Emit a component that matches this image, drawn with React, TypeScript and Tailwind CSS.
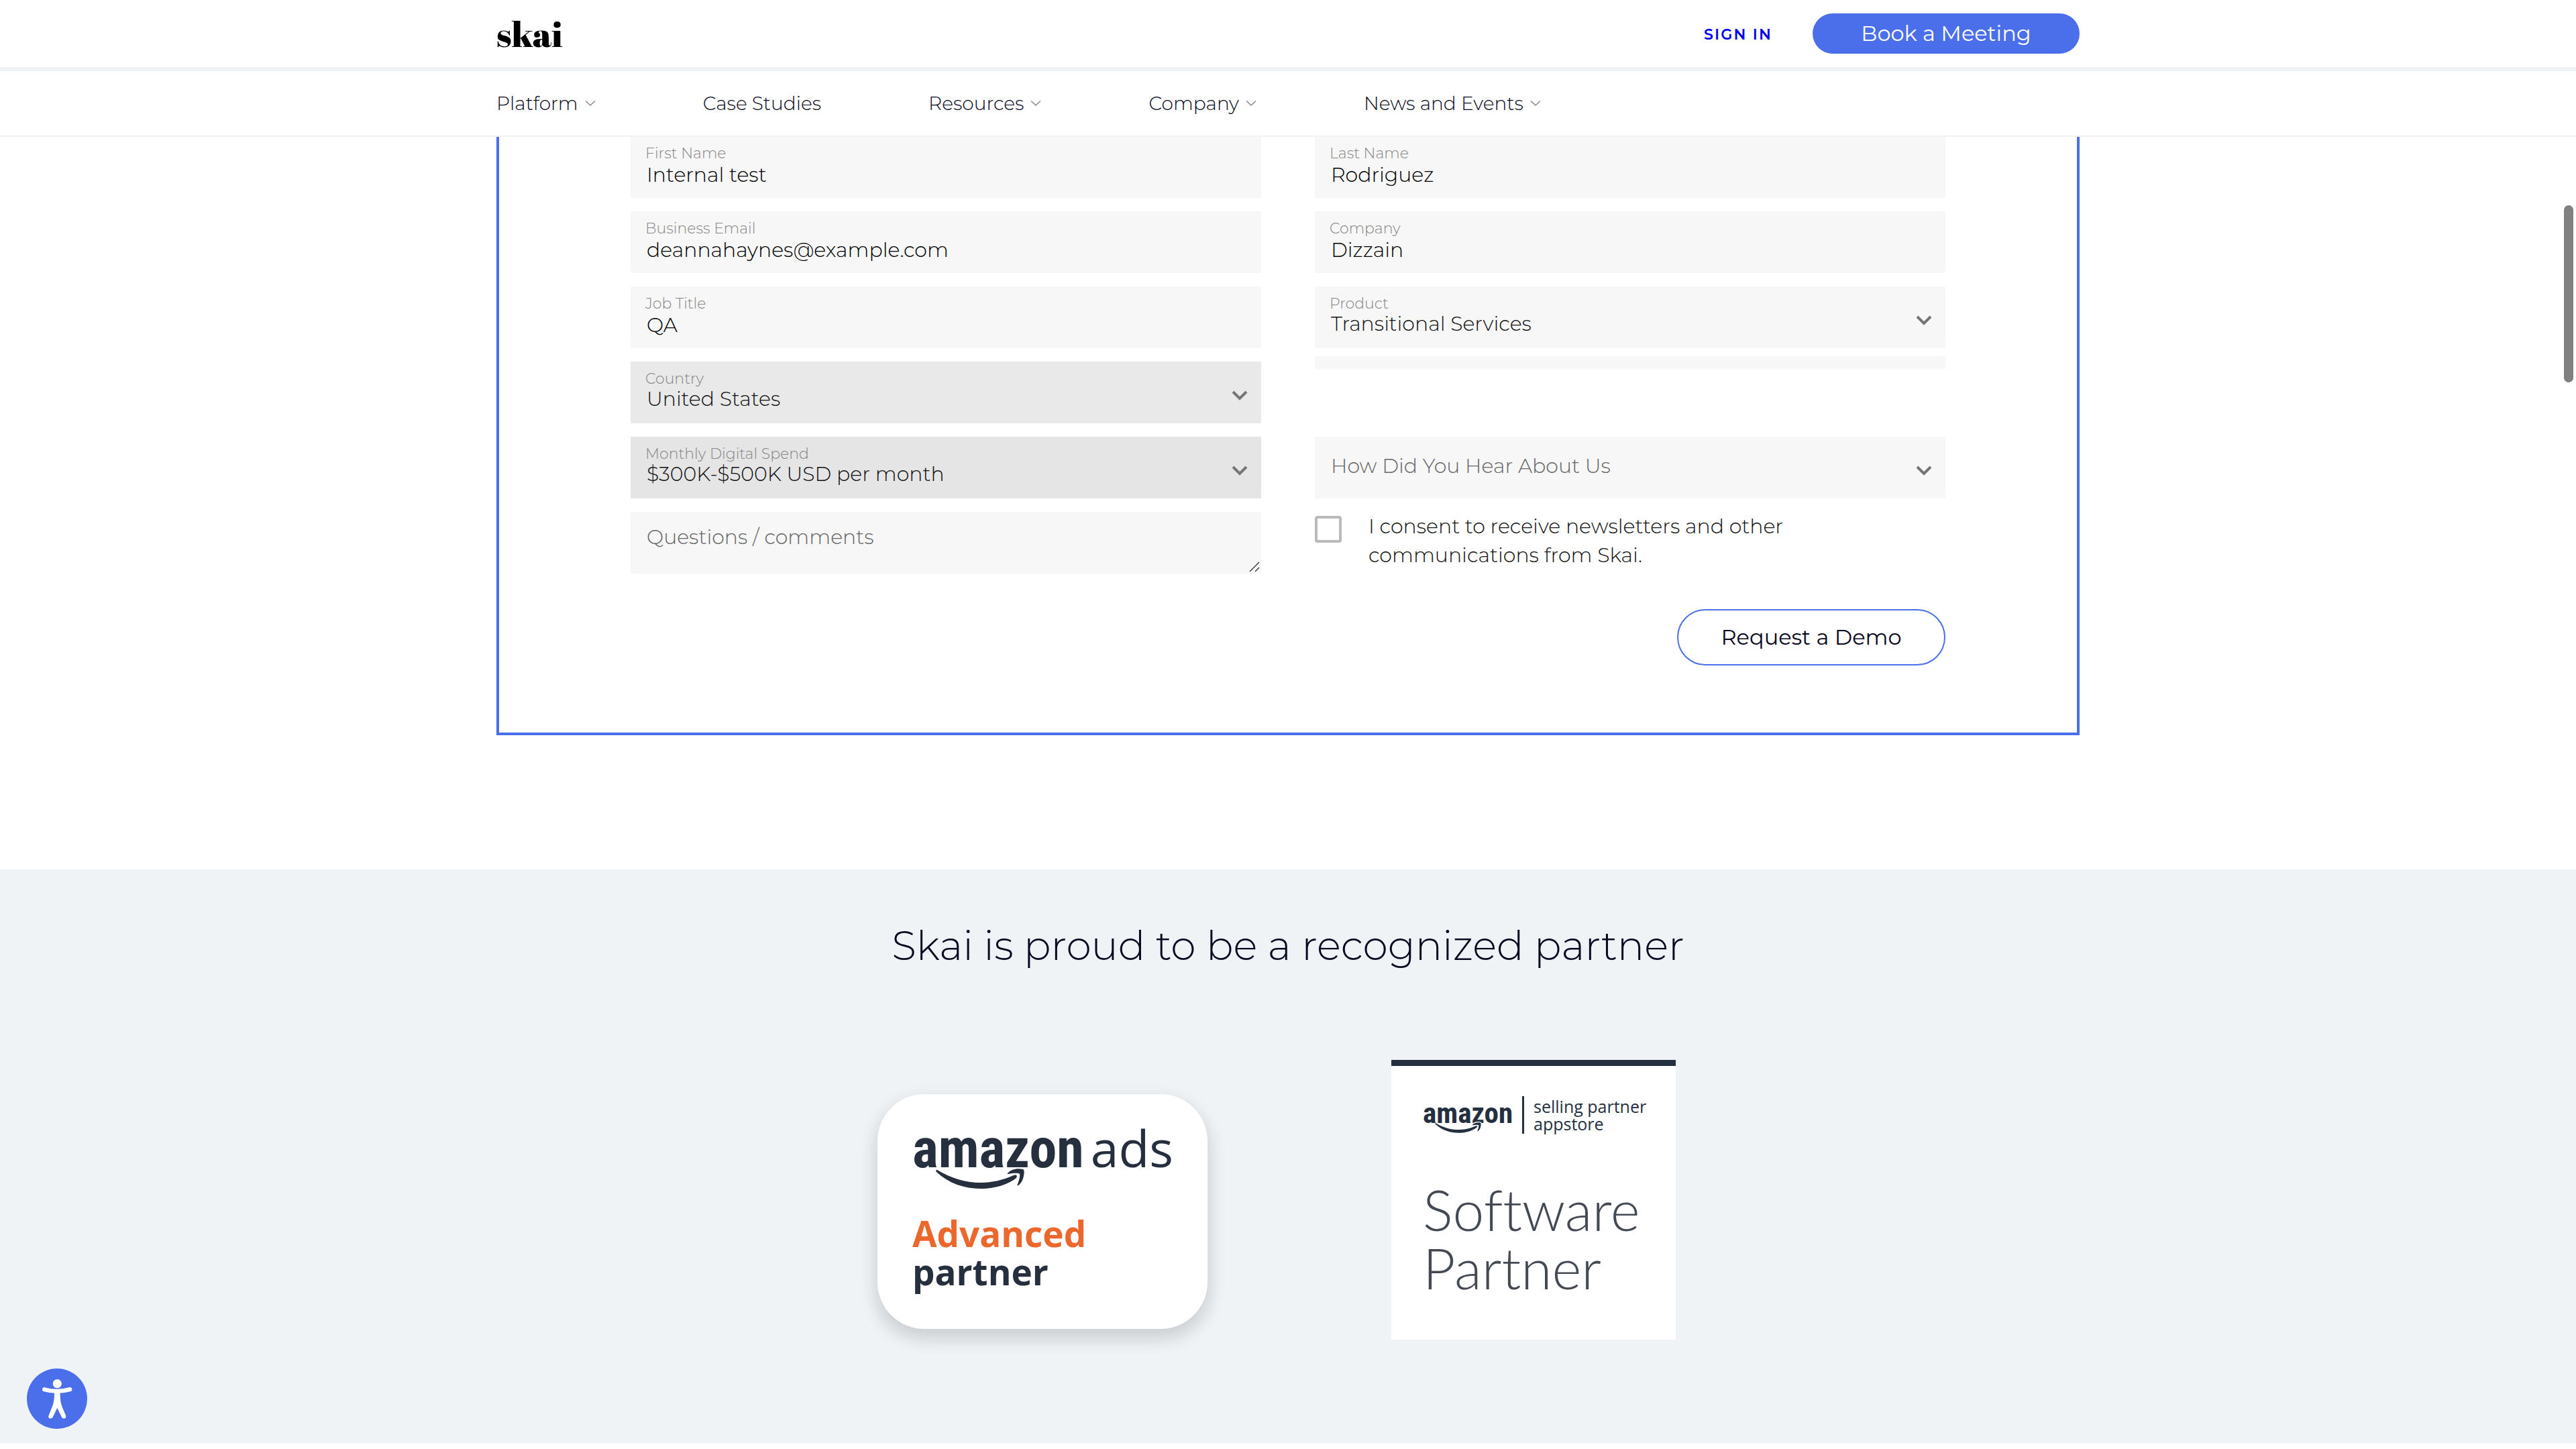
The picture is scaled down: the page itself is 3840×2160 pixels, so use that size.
import { useId, type ReactNode } from 'react';

function NavChevron() {
  return (
    <svg className="h-2 w-4" viewBox="0 0 16 8" fill="none" stroke="#8a8a94" strokeWidth="1.5" aria-hidden="true">
      <path d="M1 0.5 8 7 15 0.5" />
    </svg>
  );
}

const NAV = [
  { label: 'Platform', menu: true },
  { label: 'Case Studies', menu: false },
  { label: 'Resources', menu: true },
  { label: 'Company', menu: true },
  { label: 'News and Events', menu: true },
];

function Header() {
  return (
    <header className="relative z-10 border-b-2 border-[#f2f2f2] bg-white">
      <div className="mx-auto flex h-[100px] w-full max-w-[2360px] items-center justify-between">
        <a href="#home" className="font-['Abril_Fatface','Liberation_Serif',serif] text-[52px] leading-[64px] font-normal text-black">
          skai
        </a>
        <div className="flex items-center gap-15">
          <a href="#signin" className="pt-1 text-[22px] leading-6 font-semibold tracking-widest text-[#0000ee]">
            SIGN IN
          </a>
          <button type="button" className="h-15 w-[398px] rounded-full bg-[#4b6eea] text-[32px] font-normal text-white">
            Book a Meeting
          </button>
        </div>
      </div>
      <div className="h-1.5 bg-[#eff3f6]" />
      <nav className="mx-auto flex h-24 w-full max-w-[2360px] items-center gap-40 text-[28px] text-[#080920]">
        {NAV.map((item) => (
          <a key={item.label} href="#nav" className="flex items-center gap-2.5">
            {item.label}
            {item.menu && <NavChevron />}
          </a>
        ))}
      </nav>
    </header>
  );
}

function Field({ label, id, className, children }: { label: string; id: string; className: string; children: ReactNode }) {
  return (
    <div className={`relative flex h-23 flex-col px-[22px] pt-3.5 ${className}`}>
      <label htmlFor={id} className="h-6 text-[22px] leading-6 text-[#868686]">
        {label}
      </label>
      {children}
    </div>
  );
}

function TextField({ label, value, type = 'text' }: { label: string; value: string; type?: string }) {
  const id = useId();
  return (
    <Field label={label} id={id} className="bg-[#f7f7f7]">
      <input id={id} type={type} defaultValue={value} className="mt-0.5 h-9 w-full bg-transparent pl-0.5 text-[30px] leading-9 text-black outline-none" />
    </Field>
  );
}

function SelectChevron() {
  return (
    <svg className="pointer-events-none absolute top-[43px] right-5 h-4 w-6" viewBox="0 0 24 16" fill="none" stroke="#757575" strokeWidth="4" aria-hidden="true">
      <path d="M2 2 12 12 22 2" />
    </svg>
  );
}

function SelectField({ label, value, className = 'bg-[#f7f7f7]' }: { label: string; value: string; className?: string }) {
  const id = useId();
  return (
    <Field label={label} id={id} className={className}>
      <select id={id} defaultValue={value} className="h-9 w-full appearance-none bg-transparent pl-0.5 text-[30px] leading-9 text-[#111] outline-none">
        <option>{value}</option>
      </select>
      <SelectChevron />
    </Field>
  );
}

function DemoForm() {
  return (
    <form className="mx-auto -mt-px w-full max-w-[2360px] border-x-4 border-b-4 border-[#4b6eea] px-49 pb-25">
      <div className="grid grid-cols-2 gap-x-20 gap-y-5">
        <TextField label="First Name" value="Internal test" />
        <TextField label="Last Name" value="Rodriguez" />
        <TextField label="Business Email" value="deannahaynes@example.com" type="email" />
        <TextField label="Company" value="Dizzain" />
        <TextField label="Job Title" value="QA" />
        <SelectField label="Product" value="Transitional Services" />
        <SelectField label="Country" value="United States" className="bg-[#e9e9e9]" />
        <div>
          <div className="-mt-2 h-[19px] bg-[#f7f7f7]" />
        </div>
        <SelectField label="Monthly Digital Spend" value="$300K-$500K USD per month" className="bg-[#e5e5e5]" />
        <div className="relative h-23 bg-[#f7f7f7] px-[22px] pt-[26px]">
          <select aria-label="How Did You Hear About Us" className="h-9 w-full appearance-none bg-transparent pl-0.5 text-[30px] leading-9 text-[#666] outline-none">
            <option>How Did You Hear About Us</option>
          </select>
          <SelectChevron />
        </div>
        <div className="relative h-23">
          <textarea
            aria-label="Questions / comments"
            placeholder="Questions / comments"
            className="block h-full w-full resize-none overflow-hidden bg-[#f7f7f7] px-6 pt-5 text-[30px] leading-9 text-black outline-none placeholder:text-[#666]"
          />
          <svg className="absolute right-0.5 bottom-0.5 size-4" viewBox="0 0 16 16" stroke="#444" strokeWidth="1.5" aria-hidden="true">
            <path d="M1 15 15 1M9 15 15 9" />
          </svg>
        </div>
        <label className="flex items-start gap-10 text-[30px] leading-[43px] text-[#111]">
          <input type="checkbox" className="mt-1.5 size-10 shrink-0 appearance-none rounded-sm border-4 border-[#bbb] bg-white" />
          <span className="max-w-[720px]">I consent to receive newsletters and other communications from Skai.</span>
        </label>
      </div>
      <div className="mt-[53px] flex justify-end">
        <button type="submit" className="h-21 w-[400px] rounded-full border-2 border-[#4b6eea] text-[32px] font-normal text-[#080920]">
          Request a Demo
        </button>
      </div>
    </form>
  );
}

function Smile({ className }: { className: string }) {
  return (
    <svg className={className} viewBox="0 0 250 34" fill="currentColor" aria-hidden="true">
      <path d="M37 4C35.5 3 34.5 5 36 7C54 24 78 32 102 32C124 32 144 25 155 16C157 13 155 10 151 12C135 19 119 23 102 23C79 23 57 16 37 4Z" />
      <path
        d="M142 9C147 3 156 1 165 3C167 4 167 8 166 13C165 19 162 24 158 27C157 28 156 27 157 25C159 20 161 13 160 10C158 8 149 9 143 10C142 10 141 10 142 9Z"
        stroke="#fff"
        strokeWidth="5"
        paintOrder="stroke"
      />
    </svg>
  );
}

function AmazonAdsBadge() {
  return (
    <div className="mt-[51px] h-[350px] w-[492px] rounded-[70px] bg-white pt-[35px] pl-[52px] font-['Open_Sans',sans-serif] text-[#252f3e] shadow-[0_12px_24px_4px_rgba(0,0,0,0.14)]">
      <div className="relative flex h-[110px] items-baseline gap-2.5">
        <span className="font-['Roboto_Condensed','Roboto',sans-serif] text-[82px] leading-[90px] font-bold">amazon</span>
        <span className="text-[75px] leading-[90px] font-normal">ads</span>
        <Smile className="absolute bottom-0.5 left-0 h-[34px] w-[250px]" />
      </div>
      <p className="mt-[34px] text-[53px] leading-[57px] font-bold">
        <span className="block text-[#ec672c]">Advanced</span>
        partner
      </p>
    </div>
  );
}

function SoftwarePartnerBadge() {
  return (
    <div className="h-[417px] w-[424px] border-t-9 border-[#242f3f] bg-white pt-[45px] pl-[47px] text-[#242f3f]">
      <div className="flex h-14 items-center">
        <div className="relative h-14 w-[132px]">
          <span className="block font-['Roboto_Condensed','Roboto',sans-serif] text-[43px] leading-[50px] font-bold">amazon</span>
          <Smile className="absolute bottom-0 left-0 h-[18px] w-[130px]" />
        </div>
        <div className="ml-4 h-full w-[3px] bg-[#242f3f]" />
        <p className="ml-3.5 font-['Open_Sans',sans-serif] text-[25px] leading-[26px] font-normal">
          selling partner
          <br />
          appstore
        </p>
      </div>
      <p className="mt-[69px] font-['Lato',sans-serif] text-[84px] leading-[87px] font-light text-[#434a53] [font-variant-ligatures:none]">
        Software
        <br />
        Partner
      </p>
    </div>
  );
}

function Partners() {
  return (
    <section className="mt-50 bg-[#eff3f6] pt-[78px] pb-[154px]">
      <h2 className="text-center text-[60px] leading-[72px] font-light text-[#080920]">Skai is proud to be a recognized partner</h2>
      <div className="mx-auto mt-[134px] grid w-full max-w-[1464px] grid-cols-2 items-start justify-items-center">
        <AmazonAdsBadge />
        <SoftwarePartnerBadge />
      </div>
    </section>
  );
}

export default function App() {
  return (
    <div className="relative min-h-screen bg-white font-['Montserrat','Inter',sans-serif] font-light">
      <Header />
      <main>
        <DemoForm />
        <Partners />
      </main>
      <button type="button" aria-label="Accessibility" className="absolute bottom-[30px] left-10 size-[90px] rounded-full bg-[#4b6eea]">
        <svg viewBox="0 0 90 90" aria-hidden="true">
          <circle cx="45.3" cy="22.6" r="6.6" fill="#fff" />
          <path d="M26.2 31.2 C38 34.6 52 34.6 64.2 31.2" fill="none" stroke="#fff" strokeWidth="6.4" strokeLinecap="round" />
          <path d="M41 36C41 47 40 52 37 59L32.6 70C31.6 72.6 32.8 74.6 35.4 74.6C37.4 74.6 38.4 73.4 39.2 71.6L45.3 58.7L51.4 71.6C52.2 73.4 53.2 74.6 55.2 74.6C57.8 74.6 59 72.6 58 70L53.4 59C50.6 52 49.6 47 49.6 36Z" fill="#fff" />
        </svg>
      </button>
      <div className="absolute top-[306px] right-1 h-[264px] w-3.5 rounded-full bg-[#808080]" />
    </div>
  );
}
